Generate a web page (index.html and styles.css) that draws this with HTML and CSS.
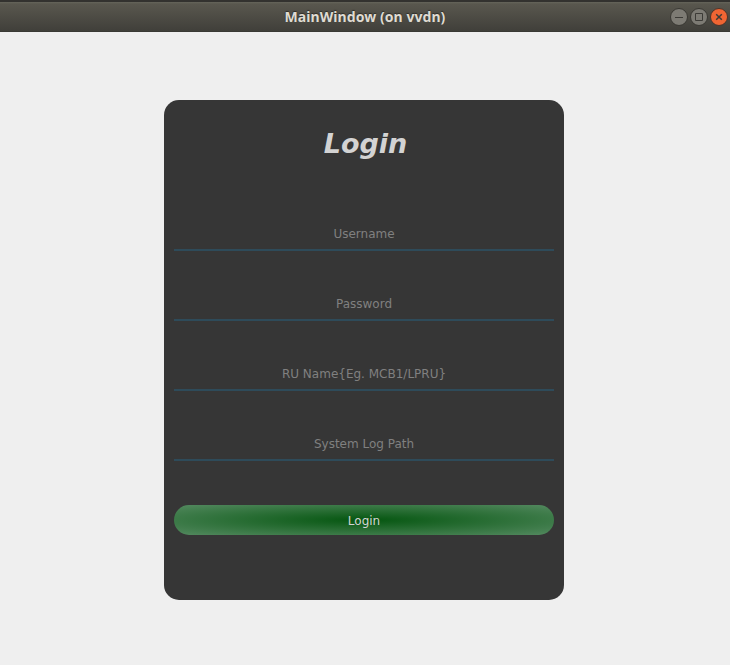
FILE: index.html
```html
<!DOCTYPE html>
<html lang="en">
<head>
<meta charset="utf-8">
<title>MainWindow</title>
<link rel="stylesheet" href="styles.css">
</head>
<body>
<header class="titlebar">
  <h1 class="window-title">MainWindow (on vvdn)</h1>
  <div class="controls">
    <svg class="control" viewBox="0 0 20 20"><circle class="ring" cx="10" cy="10" r="8.5"/><path d="M6 10.5h8"/></svg>
    <svg class="control" viewBox="0 0 20 20"><circle class="ring" cx="10" cy="10" r="8.5"/><path d="M6.5 6.5h7v7h-7z"/></svg>
    <svg class="control close" viewBox="0 0 20 20"><circle class="ring" cx="10" cy="10" r="8.5"/><path d="M7.2 7.2l5.6 5.6M12.8 7.2l-5.6 5.6"/></svg>
  </div>
</header>
<main class="content">
  <section class="card">
    <h2 class="heading">Login</h2>
    <div class="field">Username</div>
    <div class="field">Password</div>
    <div class="field">RU Name{Eg. MCB1/LPRU}</div>
    <div class="field">System Log Path</div>
    <button class="login">Login</button>
  </section>
</main>
</body>
</html>
```
FILE: styles.css
```css
* { box-sizing: border-box; }
body {
  margin: 0;
  height: 665px;
  overflow: hidden;
  background: #efefef;
  font-family: "DejaVu Sans", sans-serif;
}
.titlebar {
  display: grid;
  grid-template-columns: 61px 1fr 61px;
  align-items: center;
  height: 32px;
  border-top: 2px solid #33322f;
  border-bottom: 1px solid #3a3935;
  background: linear-gradient(#66655b 0, #59574e 2px, #403f3a 100%);
}
.window-title {
  grid-column: 2;
  margin: 0;
  text-align: center;
  font: bold 14px/20px "Noto Sans", sans-serif;
  letter-spacing: 0.06px;
  color: #dfdbd2;
  text-shadow: 0 -1px 1px #2e2d29;
  white-space: nowrap;
}
.controls { display: flex; }
.control {
  width: 20px;
  height: 20px;
  fill: none;
  stroke: #3c3b37;
  stroke-width: 1;
}
.ring { fill: #7d7b74; stroke: #393833; }
.close .ring { fill: #f06533; stroke: #4c342a; }
.close { stroke-width: 1.5; }
.close .ring { stroke-width: 1; }
.content {
  display: flex;
  justify-content: center;
  padding: 68px 2px 0 0;
}
.card {
  display: flex;
  flex-direction: column;
  width: 400px;
  height: 500px;
  padding: 21px 10px 0;
  border-radius: 15px;
  background: #363636;
}
.heading {
  height: 46px;
  margin: 0 0 34px;
  padding-left: 3px;
  text-align: center;
  font-size: 27px;
  font-style: italic;
  line-height: 46px;
  color: #d3d3d3;
}
.field {
  height: 50px;
  margin-bottom: 20px;
  padding-top: 16px;
  border-bottom: 2px solid #2e4b5a;
  text-align: center;
  font-size: 12px;
  line-height: 34px;
  color: #808080;
}
.login {
  height: 30px;
  margin-top: 24px;
  padding: 2px 0 0;
  border: 0;
  border-radius: 15px;
  background: radial-gradient(ellipse 269px 21px at center, #055610 0%, #53895f 100%);
  font: 12px "DejaVu Sans", sans-serif;
  color: #d3d3d3;
}
```
